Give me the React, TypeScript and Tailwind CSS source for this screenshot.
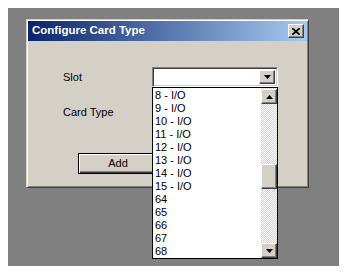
import React from "react";

const items = [
  "8 - I/O",
  "9 - I/O",
  "10 - I/O",
  "11 - I/O",
  "12 - I/O",
  "13 - I/O",
  "14 - I/O",
  "15 - I/O",
  "64",
  "65",
  "66",
  "67",
  "68",
];

function Down() {
  return (
    <svg width="7" height="4" viewBox="0 0 7 4">
      <path d="M0 0H7L3.5 4Z" fill="#000" />
    </svg>
  );
}
function Up() {
  return (
    <svg width="7" height="4" viewBox="0 0 7 4">
      <path d="M0 4H7L3.5 0Z" fill="#000" />
    </svg>
  );
}

const raised =
  "border border-t-white border-l-white border-r-[#404040] border-b-[#404040] shadow-[inset_-1px_-1px_#808080,inset_1px_1px_#d4d0c8] bg-[#d4d0c8]";

export default function App() {
  return (
    <div
      className="w-[347px] h-[275px] bg-white pt-[8px] pl-[8px]"
      style={{ fontFamily: '"Liberation Sans", Arial, sans-serif' }}
    >
      <div className="w-[331px] h-[258px] bg-[#808080] pt-[11px] pl-[18px]">
        <div className="relative w-[283px] h-[169px] bg-[#d4d0c8] border border-t-[#d4d0c8] border-l-[#d4d0c8] border-r-[#404040] border-b-[#404040] shadow-[inset_1px_1px_white,inset_-1px_-1px_#808080] p-[1px] flex flex-col">
          <div className="h-[20px] flex items-center justify-between pl-[4px] pr-[3px] bg-[linear-gradient(to_right,#0a246a,#a6caf0)]">
            <span className="text-white font-bold text-[11.5px] leading-none">
              Configure Card Type
            </span>
            <div className={`w-[16px] h-[14px] flex items-center justify-center ${raised}`}>
              <svg width="8" height="7" viewBox="0 0 8 7">
                <path d="M0 0L8 7M8 0L0 7" stroke="#000" strokeWidth="1.8" />
              </svg>
            </div>
          </div>

          <div className="flex flex-col pl-[35px] pt-[26px] text-[11px] text-black">
            <div className="flex items-center h-[20px]">
              <span className="w-[89px]">Slot</span>
              <div className="relative w-[126px] h-[20px] bg-white border border-t-[#808080] border-l-[#808080] border-b-white border-r-white shadow-[inset_1px_1px_#404040,inset_-1px_-1px_#d4d0c8] flex justify-end p-[2px]">
                <div className={`w-[16px] h-full flex items-center justify-center ${raised}`}>
                  <Down />
                </div>
                <div className="absolute left-[-1px] top-[19px] w-[126px] h-[172px] bg-white border border-black z-10 flex">
                  <div className="flex-1 pt-[1px] pl-[2px]">
                    {items.map((t) => (
                      <div key={t} className="h-[13px] leading-[13px] text-[11px] text-black">
                        {t}
                      </div>
                    ))}
                  </div>
                  <div className="w-[16px] flex flex-col bg-[repeating-conic-gradient(#ffffff_0%_25%,#d4d0c8_0%_50%)] bg-[length:2px_2px]">
                    <div className={`h-[15px] mt-[1px] flex items-center justify-center ${raised}`}>
                      <Up />
                    </div>
                    <div className="h-[60px]" />
                    <div className={`h-[25px] ${raised}`} />
                    <div className="flex-1" />
                    <div className={`h-[15px] flex items-center justify-center ${raised}`}>
                      <Down />
                    </div>
                  </div>
                </div>
              </div>
            </div>
            <div className="flex items-center h-[20px] mt-[15px]">
              <span className="w-[89px]">Card Type</span>
            </div>
            <div className="mt-[31px] pl-[15px]">
              <div className="w-[80px] h-[21px] border border-black bg-[#d4d0c8] shadow-[inset_1px_1px_white,inset_-1px_-1px_#404040,inset_-2px_-2px_#808080] flex items-center justify-center text-[11px]">
                Add
              </div>
            </div>
          </div>
        </div>
      </div>
    </div>
  );
}
